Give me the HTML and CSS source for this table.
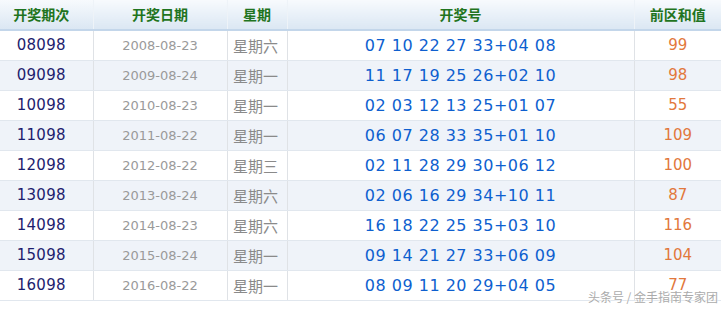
FILE: index.html
```html
<!DOCTYPE html>
<html lang="zh">
<head>
<meta charset="utf-8">
<title>开奖</title>
<link rel="stylesheet" href="styles.css">
</head>
<body>
<div class="wrap">
<table class="tbl">
<colgroup>
<col class="c1"><col class="c2"><col class="c3"><col class="c4"><col class="c5">
</colgroup>
<thead>
<tr><th class="first">开奖期次</th><th>开奖日期</th><th>星期</th><th>开奖号</th><th>前区和值</th></tr>
</thead>
<tbody>
<tr><td class="id">08098</td><td class="date">2008-08-23</td><td class="wk">星期六</td><td class="num">07 10 22 27 33+04 08</td><td class="sum">99</td></tr>
<tr><td class="id">09098</td><td class="date">2009-08-24</td><td class="wk">星期一</td><td class="num">11 17 19 25 26+02 10</td><td class="sum">98</td></tr>
<tr><td class="id">10098</td><td class="date">2010-08-23</td><td class="wk">星期一</td><td class="num">02 03 12 13 25+01 07</td><td class="sum">55</td></tr>
<tr><td class="id">11098</td><td class="date">2011-08-22</td><td class="wk">星期一</td><td class="num">06 07 28 33 35+01 10</td><td class="sum">109</td></tr>
<tr><td class="id">12098</td><td class="date">2012-08-22</td><td class="wk">星期三</td><td class="num">02 11 28 29 30+06 12</td><td class="sum">100</td></tr>
<tr><td class="id">13098</td><td class="date">2013-08-24</td><td class="wk">星期六</td><td class="num">02 06 16 29 34+10 11</td><td class="sum">87</td></tr>
<tr><td class="id">14098</td><td class="date">2014-08-23</td><td class="wk">星期六</td><td class="num">16 18 22 25 35+03 10</td><td class="sum">116</td></tr>
<tr><td class="id">15098</td><td class="date">2015-08-24</td><td class="wk">星期一</td><td class="num">09 14 21 27 33+06 09</td><td class="sum">104</td></tr>
<tr><td class="id">16098</td><td class="date">2016-08-22</td><td class="wk">星期一</td><td class="num">08 09 11 20 29+04 05</td><td class="sum">77</td></tr>
</tbody>
</table>
<div class="mark">头条号 / 金手指南专家团</div>
</div>
</body>
</html>
```
FILE: styles.css
```css
html, body {
  margin: 0;
  padding: 0;
  background: #ffffff;
}
.wrap {
  position: relative;
  width: 721px;
  height: 309px;
  overflow: hidden;
}
.tbl {
  width: 721px;
  border-collapse: collapse;
  table-layout: fixed;
  font-family: "DejaVu Sans", "Noto Sans CJK SC", sans-serif;
}
.c1 { width: 93px; }
.c2 { width: 134px; }
.c3 { width: 60px; }
.c4 { width: 347px; }
.c5 { width: 87px; }
.tbl th {
  height: 29px;
  padding: 0;
  background: linear-gradient(#f7fafd, #dbe7f3);
  border-bottom: 2px solid #c3d6ea;
  border-right: 1px solid #eef3f8;
  font-family: "Noto Sans CJK SC", sans-serif;
  font-size: 14px;
  font-weight: bold;
  color: #1f7420;
  text-align: center;
  line-height: 29px;
}
.tbl th:last-child { border-right: 0; }
.tbl th.first { padding-right: 10px; }
.tbl td {
  height: 29px;
  padding: 0;
  border-bottom: 1px solid #e1e7ee;
  border-right: 1px solid #dfe2e6;
  text-align: center;
  line-height: 29px;
  white-space: nowrap;
}
.tbl td:last-child { border-right: 0; }
.tbl tbody tr:nth-child(even) td { background: #eff3f9; }
.id {
  font-size: 15px;
  letter-spacing: 0.3px;
  color: #1d1d6e;
  padding-right: 10px !important;
}
.date {
  font-size: 13px;
  color: #9a9a9a;
}
.wk {
  font-family: "Noto Sans CJK SC", sans-serif;
  font-size: 15px;
  color: #8a8a8a;
  padding-right: 3px !important;
}
.num {
  font-size: 16px;
  letter-spacing: 0.5px;
  color: #0e5fcf;
}
.sum {
  font-size: 15px;
  color: #e2783c;
}
.mark {
  position: absolute;
  right: 3px;
  bottom: 5px;
  font-family: "Noto Sans CJK SC", sans-serif;
  font-size: 12px;
  color: #ababab;
  text-shadow: 0 0 2px #ffffff, 0 0 2px #ffffff;
  line-height: 15px;
}
```
